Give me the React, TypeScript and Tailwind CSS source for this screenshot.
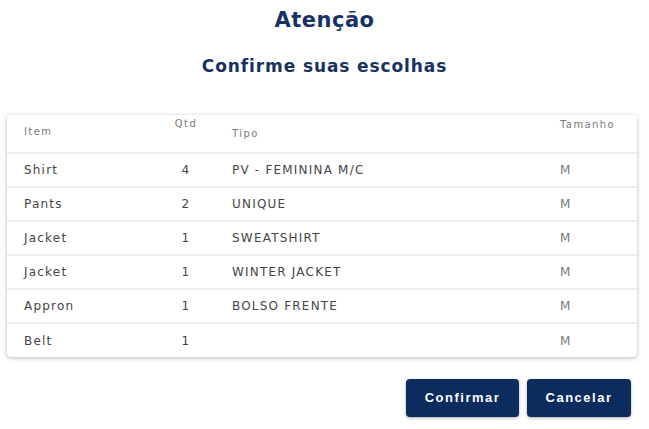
import React from "react";

const rows = [
  { item: "Shirt", qtd: 4, tipo: "PV - FEMININA M/C", tam: "M" },
  { item: "Pants", qtd: 2, tipo: "UNIQUE", tam: "M" },
  { item: "Jacket", qtd: 1, tipo: "SWEATSHIRT", tam: "M" },
  { item: "Jacket", qtd: 1, tipo: "WINTER JACKET", tam: "M" },
  { item: "Appron", qtd: 1, tipo: "BOLSO FRENTE", tam: "M" },
  { item: "Belt", qtd: 1, tipo: "", tam: "M" },
];

const App = () => {
  return (
    <div className="w-[649px] h-[429px] bg-white font-['DejaVu_Sans',sans-serif]">
      <div className="flex flex-col items-center pt-[7px]">
        <h1 className="text-[21px] leading-[26px] font-bold tracking-[0.5px] text-[#163262]">Atenção</h1>
        <h2 className="mt-[22px] text-[17px] leading-[22px] font-bold tracking-[0.9px] text-[#163262]">
          Confirme suas escolhas
        </h2>
      </div>

      <div className="mx-[7px] mt-[38px] w-[630px] rounded-[4px] bg-white shadow-[0_1px_4px_rgba(0,0,0,0.28)]">
        <table className="w-full border-collapse text-left">
          <thead>
            <tr className="h-[38px] border-b-2 border-[#ececec] text-[10px] leading-[14px] tracking-[1.4px] text-[#7a7a7a]">
              <th className="w-[150px] pl-[17px] pt-[10px] align-top font-normal">Item</th>
              <th className="w-[58px] pt-[2px] text-center align-top font-normal">Qtd</th>
              <th className="pl-[17px] pt-[12px] align-top font-normal">Tipo</th>
              <th className="w-[94px] pl-[17px] pt-[3px] align-top font-normal">Tamanho</th>
            </tr>
          </thead>
          <tbody>
            {rows.map((r, i) => (
              <tr
                key={i}
                className={`h-[34px] text-[12px] tracking-[1.2px] text-[#454545] ${i < rows.length - 1 ? "border-b-2 border-[#ececec]" : ""}`}
              >
                <td className="pl-[17px]">{r.item}</td>
                <td className="text-center">{r.qtd}</td>
                <td className="pl-[17px]">{r.tipo}</td>
                <td className="pl-[17px] text-[#7a7a7a]">{r.tam}</td>
              </tr>
            ))}
          </tbody>
        </table>
      </div>

      <div className="flex justify-end gap-[8px] pr-[18px] mt-[22px] font-['Liberation_Sans',sans-serif]">
        <button className="h-[38px] w-[113px] rounded-[4px] bg-[#0b2c5d] text-[13px] font-bold tracking-[1.5px] text-white shadow-[0_1px_3px_rgba(0,0,0,0.35)]">
          Confirmar
        </button>
        <button className="h-[38px] w-[104px] rounded-[4px] bg-[#0b2c5d] text-[13px] font-bold tracking-[1.5px] text-white shadow-[0_1px_3px_rgba(0,0,0,0.35)]">
          Cancelar
        </button>
      </div>
    </div>
  );
};

export default App;
